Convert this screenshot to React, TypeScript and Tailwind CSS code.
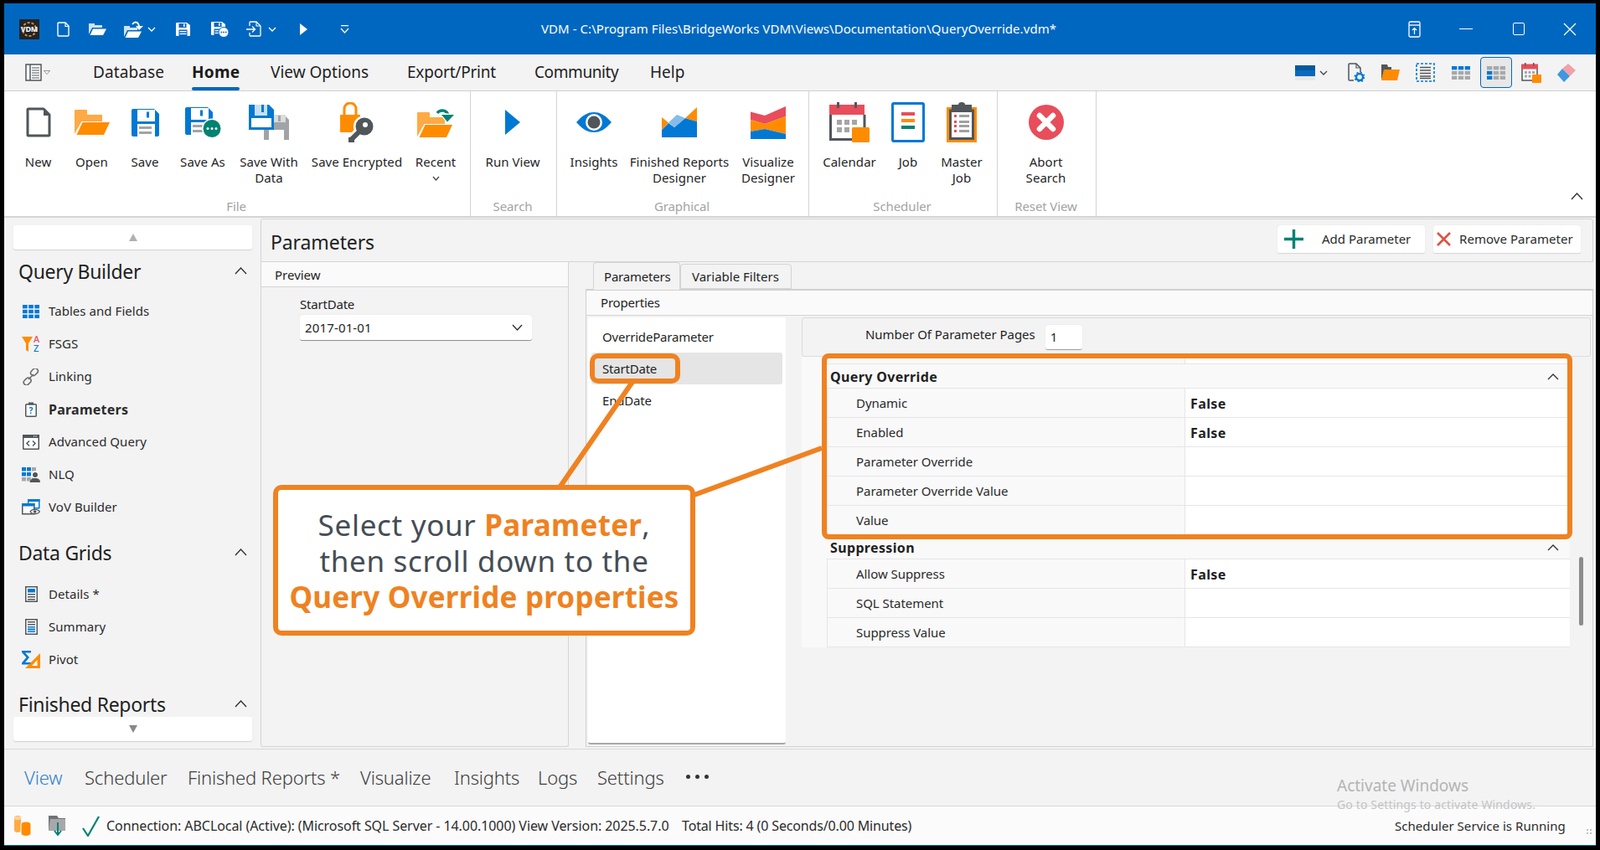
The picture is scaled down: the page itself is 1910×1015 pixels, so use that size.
import React from "react";

const BLUE = "#0078d4";
const ORANGE = "#ff8c00";
const LORANGE = "#ffaa44";
const GRAY = "#50565a";
const MID = "#a0a4a6";
const TEAL = "#008272";
const RED = "#e84d5b";

const Svg = ({ w, h, children }: { w: number; h: number; children: React.ReactNode }) => (
  <svg width={w} height={h} viewBox={`0 0 ${w} ${h}`} className="block shrink-0">
    {children}
  </svg>
);

const Floppy = ({ c = BLUE, line = "#a0a4a6" }: { c?: string; line?: string }) => (
  <g>
    <path d="M2 0H27L33 6V31a2 2 0 01-2 2H2a2 2 0 01-2-2V2a2 2 0 012-2z" fill={c} />
    <rect x="7" y="1" width="21" height="14" fill="#fff" />
    <rect x="18" y="3.5" width="3" height="7" fill={c} />
    <rect x="7" y="18" width="21" height="15" fill="#fff" />
    <rect x="9" y="21" width="15" height="3" fill={line} />
    <rect x="9" y="27" width="15" height="3" fill={line} />
  </g>
);

const Folder = ({ dy = 0 }: { dy?: number }) => (
  <g transform={`translate(0 ${dy})`}>
    <path d="M0 1a1 1 0 011-1h13a1 1 0 011 1v5h18v8H8.5L0 29z" fill={LORANGE} />
    <path d="M9.5 15H42L35 30H2.5z" fill={ORANGE} />
  </g>
);

const IconNew = () => (
  <Svg w={30} h={36}>
    <path d="M2 3a1 1 0 011-1h18l7 7v24a1 1 0 01-1 1H3a1 1 0 01-1-1z" fill="#fff" stroke={GRAY} strokeWidth="3" strokeLinejoin="round" />
    <path d="M21 3v7h7z" fill={GRAY} />
  </Svg>
);
const IconOpen = () => (
  <Svg w={42} h={30}>
    <Folder />
  </Svg>
);
const IconSave = () => (
  <Svg w={33} h={33}>
    <Floppy />
  </Svg>
);
const IconSaveAs = () => (
  <Svg w={43} h={37}>
    <Floppy />
    <circle cx="32" cy="25.5" r="12" fill="#fff" />
    <circle cx="32" cy="25.5" r="10.5" fill={TEAL} />
    <circle cx="27" cy="25.5" r="1.5" fill="#fff" />
    <circle cx="32" cy="25.5" r="1.5" fill="#fff" />
    <circle cx="37" cy="25.5" r="1.5" fill="#fff" />
  </Svg>
);
const IconSaveData = () => (
  <Svg w={48} h={42}>
    <path d="M18 12H42L48 18V42H18z" fill={MID} />
    <rect x="30" y="12" width="14" height="9" fill="#dcdcdc" />
    <rect x="35" y="13" width="3" height="7" fill={MID} />
    <rect x="24" y="30" width="18" height="12" fill="#fff" />
    <path d="M0 0H24L30 6V30H0z" fill={BLUE} stroke="#fff" strokeWidth="0" />
    <rect x="7" y="0" width="15" height="13" fill="#c7e0f4" />
    <rect x="15" y="0" width="3" height="9" fill={BLUE} />
    <rect x="3" y="16" width="24" height="11" fill="#fff" />
  </Svg>
);
const IconEncrypted = () => (
  <Svg w={40} h={48}>
    <path d="M5 16V8a7 7 0 0114 0v8" fill="none" stroke={ORANGE} strokeWidth="3" />
    <rect x="0" y="15" width="24" height="21" rx="1" fill={ORANGE} />
    <circle cx="29" cy="29" r="13" fill="#fff" />
    <path d="M24 33L11 46" stroke="#fff" strokeWidth="10" />
    <circle cx="29" cy="29" r="10.5" fill={GRAY} />
    <circle cx="30" cy="27" r="3" fill="#fff" />
    <path d="M24 34L13 45" stroke={GRAY} strokeWidth="6" />
    <rect x="10" y="42" width="7" height="6" fill={GRAY} />
  </Svg>
);
const IconRecent = () => (
  <Svg w={45} h={36}>
    <Folder dy={6} />
    <path d="M24 7C28 1 36 2 38 10" fill="none" stroke="#fff" strokeWidth="7" />
    <path d="M24 7C28 2 36 3 37.5 11" fill="none" stroke={TEAL} strokeWidth="3.5" />
    <path d="M28 8L44 9L36 18z" fill="#fff" stroke="#fff" strokeWidth="2" />
    <path d="M29 9H44L36 17.5z" fill={TEAL} />
  </Svg>
);
const IconRun = () => (
  <Svg w={18} h={30}>
    <path d="M0 0L18 15L0 30z" fill={BLUE} />
  </Svg>
);
const IconEye = () => (
  <Svg w={42} h={24}>
    <path d="M0 12C8 3 14 0 21 0S34 3 42 12C34 21 28 24 21 24S8 21 0 12z" fill={BLUE} />
    <circle cx="21" cy="12" r="10" fill="#fff" />
    <circle cx="21" cy="12" r="7.5" fill={GRAY} />
  </Svg>
);
const IconFinished = () => (
  <Svg w={42} h={36}>
    <path d="M0 27L8 19L15 24L28 13L42 17V36H0z" fill={BLUE} />
    <path d="M0 12L8 18.5L0 27z" fill={ORANGE} />
    <path d="M18 9L28 13L15 24L8 18.5z" fill="#84bcea" />
    <path d="M28 13L42 0V17z" fill={ORANGE} />
  </Svg>
);
const IconVisualize = () => (
  <Svg w={42} h={39}>
    <path d="M0 6.5L17 11L42 0V12L17 21L0 16z" fill={RED} />
    <path d="M0 16L17 21L42 12V33L17 27L0 30z" fill={ORANGE} />
    <path d="M0 30L17 27L42 33V39H0z" fill={BLUE} />
  </Svg>
);
const IconCalendar = () => (
  <Svg w={48} h={48}>
    <path d="M1.5 15V44.5H42V15" fill="#fff" stroke={GRAY} strokeWidth="3" />
    <rect x="0" y="3" width="42" height="12" fill={RED} />
    <rect x="9" y="0" width="3" height="7" fill={GRAY} />
    <rect x="30" y="0" width="3" height="7" fill={GRAY} />
    {[[9, 21], [18, 21], [27, 21], [9, 30], [18, 30]].map(([x, y]) => (
      <rect key={x + "-" + y} x={x} y={y} width="6" height="6" fill="#a6a6a6" />
    ))}
    <rect x="27" y="30" width="21" height="18" rx="1.5" fill={ORANGE} />
  </Svg>
);
const IconJob = () => (
  <Svg w={40} h={48}>
    <rect x="1.5" y="1.5" width="37" height="45" rx="1.5" fill="#fff" stroke={BLUE} strokeWidth="3" />
    <rect x="12" y="12" width="16" height="4" fill={RED} />
    <rect x="12" y="20" width="16" height="4" fill={ORANGE} />
    <rect x="12" y="28" width="16" height="4" fill={TEAL} />
  </Svg>
);
const IconMaster = () => (
  <Svg w={36} h={48}>
    <rect x="0" y="6" width="36" height="42" fill={ORANGE} />
    <rect x="4.5" y="10" width="27" height="33.5" fill="#fff" stroke={GRAY} strokeWidth="3" />
    <path d="M6 3H14A4 3 0 0122 3H30V12H6z" fill={GRAY} />
    {[15, 22, 27, 33].map((y) => (
      <g key={y}>
        <rect x="9" y={y} width="3" height="3" fill={RED} />
        <rect x="15" y={y} width="12" height="3" fill="#a0a0a0" />
      </g>
    ))}
  </Svg>
);
const IconAbort = () => (
  <Svg w={42} h={42}>
    <circle cx="21" cy="21" r="21" fill={RED} />
    <path d="M13 13L29 29M29 13L13 29" stroke="#fff" strokeWidth="6.5" strokeLinecap="round" />
  </Svg>
);

/* sidebar */
const Grid3 = ({ w, h, cells, g = 1.5 }: { w: number; h: number; cells: string[]; g?: number }) => {
  const cw = (w - 2 * g) / 3;
  const ch = (h - 2 * g) / 3;
  return (
    <Svg w={w} h={h}>
      {cells.map((c, i) => (
        <rect key={i} x={(i % 3) * (cw + g)} y={Math.floor(i / 3) * (ch + g)} width={cw} height={ch} fill={c} />
      ))}
    </Svg>
  );
};
const SQ = "#a6a8aa";
const IconTables = () => <Grid3 w={20} h={16} cells={Array(9).fill(BLUE)} />;
const IconFsgs = () => (
  <div className="relative w-[22px] h-[18px]">
    <Svg w={14} h={18}>
      <path d="M0 0H13L8 8V18L5 16V8z" fill={ORANGE} />
    </Svg>
    <span className="absolute left-[14px] top-[-2px] text-[11px] leading-[10px] font-medium text-[#e84d5b]">A</span>
    <span className="absolute left-[14px] top-[9px] text-[11px] leading-[9px] font-medium text-[#0078d4]">Z</span>
  </div>
);
const IconLink = () => (
  <Svg w={20} h={20}>
    <g fill="none" stroke="#6a6e71" strokeWidth="1.6">
      <rect x="9.5" y="1" width="9.5" height="6.5" rx="3.2" transform="rotate(-45 14 4.5)" />
      <rect x="1" y="12" width="9.5" height="6.5" rx="3.2" transform="rotate(-45 6 15.5)" />
      <path d="M7 13L13 7" />
    </g>
  </Svg>
);
const IconParam = () => (
  <div className="relative w-[14px] h-[18px]">
    <Svg w={14} h={18}>
      <rect x="0.75" y="2.75" width="12.5" height="14.5" rx="1" fill="#fff" stroke={GRAY} strokeWidth="1.5" />
      <rect x="4" y="0.5" width="6" height="3" fill={GRAY} />
    </Svg>
    <span className="absolute left-0 top-[4px] w-[14px] text-center text-[10px] leading-[12px] font-bold text-[#0078d4]">?</span>
  </div>
);
const IconAdvanced = () => (
  <Svg w={20} h={18}>
    <rect x="0.75" y="0.75" width="18.5" height="16.5" rx="0.5" fill="#fff" stroke={GRAY} strokeWidth="1.5" />
    <rect x="0" y="0" width="20" height="4" fill={GRAY} />
    <rect x="13" y="1.3" width="1.2" height="1.2" fill="#fff" />
    <rect x="15.5" y="1.3" width="1.2" height="1.2" fill="#fff" />
    <path d="M8 7.5L5 10.5L8 13.5M12 7.5L15 10.5L12 13.5" fill="none" stroke={GRAY} strokeWidth="1.5" />
  </Svg>
);
const IconNlq = () => (
  <Svg w={22} h={18}>
    {[0, 6, 12].map((y) =>
      [0, 6, 12].map((x) => <rect key={x + "-" + y} x={x} y={y} width="5" height="4.5" fill={y === 0 || (y === 6 && x < 12) ? (x === 12 ? SQ : BLUE) : SQ} />)
    )}
    <circle cx="16" cy="9" r="4.5" fill="#fff" />
    <circle cx="16" cy="9" r="3" fill={GRAY} />
    <path d="M9.5 18C10 14 13 13 16 13S22 14 22 18z" fill={GRAY} />
  </Svg>
);
const IconVov = () => (
  <Svg w={22} h={20}>
    <rect x="7.75" y="0.75" width="13" height="10" fill="#fff" stroke={BLUE} strokeWidth="1.5" />
    <rect x="7" y="0" width="14.5" height="3" fill={BLUE} />
    <rect x="0.75" y="5.75" width="14" height="12" fill="#fff" stroke={GRAY} strokeWidth="1.5" />
    <rect x="0" y="5" width="15.5" height="3.5" fill={BLUE} />
    <path d="M10 15C12 11.5 19 11.5 21.5 15C19 18.5 12 18.5 10 15z" fill="#fff" stroke={GRAY} strokeWidth="1.2" />
    <circle cx="15.7" cy="15" r="1.8" fill={GRAY} />
  </Svg>
);
const IconDetails = () => (
  <Svg w={15} h={19}>
    <rect x="0.75" y="0.75" width="13.5" height="17.5" fill="#fff" stroke={GRAY} strokeWidth="1.5" />
    <rect x="3" y="3" width="9" height="4.5" fill={BLUE} />
    <rect x="3" y="9" width="9" height="1.5" fill={GRAY} />
    <rect x="3" y="12" width="9" height="1.5" fill={GRAY} />
    <rect x="3" y="15" width="9" height="1.5" fill={GRAY} />
  </Svg>
);
const IconSummary = () => (
  <Svg w={15} h={19}>
    <rect x="0.75" y="0.75" width="13.5" height="17.5" fill="#fff" stroke={GRAY} strokeWidth="1.5" />
    <rect x="3" y="3" width="9" height="1.5" fill={GRAY} />
    <rect x="3" y="6" width="9" height="1.5" fill={GRAY} />
    <rect x="3" y="9" width="9" height="1.5" fill={BLUE} />
    <rect x="3" y="11.5" width="9" height="2" fill={BLUE} />
    <rect x="3" y="14.5" width="9" height="1.5" fill={BLUE} />
  </Svg>
);
const IconPivot = () => (
  <Svg w={22} h={21}>
    <path d="M0 0H11V2.5H4L9 8L4 14H11V16.5H0V14.5L5.5 8L0 2V0z" fill={BLUE} />
    <path d="M22 3V21H4z" fill={ORANGE} />
    <path d="M18.5 11V18H12z" fill="#fff" />
  </Svg>
);

const Chev = ({ up = false, w = 14, h = 8, c = "#333", sw = 1.4 }: { up?: boolean; w?: number; h?: number; c?: string; sw?: number }) => (
  <Svg w={w} h={h}>
    <path d={up ? `M1 ${h - 1}L${w / 2} 1L${w - 1} ${h - 1}` : `M1 1L${w / 2} ${h - 1}L${w - 1} 1`} fill="none" stroke={c} strokeWidth={sw} />
  </Svg>
);

/* ribbon */
const RB = ({ w, icon, lines, chev }: { w: number; icon: React.ReactNode; lines: string[]; chev?: boolean }) => (
  <div className="flex flex-col items-center shrink-0" style={{ width: w }}>
    <div className="h-[50px] mt-[12px] flex items-center justify-center">{icon}</div>
    <div className="mt-[13px] text-center text-[15px] leading-[19px] tracking-[0.05px] text-[#1f1f1f] whitespace-nowrap">
      {lines.map((l) => (
        <div key={l}>{l}</div>
      ))}
      {chev && (
        <div className="flex justify-center pt-[7px]">
          <Chev w={9} h={6} c="#444" sw={1.2} />
        </div>
      )}
    </div>
  </div>
);
const RG = ({ w, label, pl = 0, children }: { w: number; label: string; pl?: number; children: React.ReactNode }) => (
  <div className="relative h-full border-r border-[#d4d4d4] flex shrink-0" style={{ width: w, paddingLeft: pl }}>
    {children}
    <div className="absolute left-0 right-[2px] top-[127px] text-center text-[15px] leading-[20px] tracking-[-0.1px] text-[#a3a3a3]">{label}</div>
  </div>
);

const SB = ({ icon, label, bold }: { icon: React.ReactNode; label: string; bold?: boolean }) => (
  <div className="h-[39px] flex items-center relative pl-[53px]">
    <div className="absolute left-[21px] w-[22px] flex justify-center">{icon}</div>
    <span className={`whitespace-nowrap text-[#2b2b2b] ${bold ? "text-[16px] font-bold tracking-[0.25px]" : "text-[15px] tracking-[0.05px]"}`}>{label}</span>
  </div>
);
const SH = ({ label, mt }: { label: string; mt: string }) => (
  <div className={`h-[30px] flex items-center justify-between pl-[17px] pr-[16px] ${mt}`}>
    <span className="text-[23px] leading-[30px] tracking-[-0.3px] text-[#1f1f1f] whitespace-nowrap -mt-[2px]">{label}</span>
    <div className="-mt-[4px]">
      <Chev up w={15} h={9} />
    </div>
  </div>
);

const Row = ({ label, value }: { label: string; value?: string }) => (
  <div className="h-[35px] flex">
    <div className="w-[30px] bg-[#f9f9f9]" />
    <div className="w-[428px] bg-[#f9f9f9] border-b border-r border-l border-[#e6e6e6] flex items-center pl-[34px] text-[15px] tracking-[-0.05px] text-[#2b2b2b] whitespace-nowrap">{label}</div>
    <div className="flex-1 bg-white border-b border-[#e6e6e6] flex items-center pl-[6px] pt-[2px] text-[16px] font-bold tracking-[0.4px] text-[#1f1f1f]">{value}</div>
  </div>
);
const Sec = ({ label }: { label: string }) => (
  <div className="h-[29px] bg-[#f9f9f9] flex items-center justify-between pl-[34px] pr-[13px] relative">
    <span className="text-[16px] font-bold tracking-[0.35px] text-[#1f1f1f]">{label}</span>
    <Chev up w={14} h={8} />
    <div className="absolute left-[30px] right-0 bottom-0 border-b border-[#e6e6e6]" />
  </div>
);

const WhiteFloppyPaths = () => (
  <g>
    <path d="M0 1a1 1 0 011-1H13L17 3V15a1 1 0 01-1 1H1a1 1 0 01-1-1z" fill="#fff" />
    <rect x="3.5" y="1" width="9" height="5" fill="#0067c0" />
    <rect x="9" y="1.5" width="1.6" height="3.5" fill="#fff" />
    <rect x="3.5" y="8.5" width="10" height="7.5" fill="#0067c0" />
    <rect x="4.5" y="10" width="8" height="1.3" fill="#fff" />
    <rect x="4.5" y="12.8" width="8" height="1.3" fill="#fff" />
  </g>
);

export default function App() {
  const menu: [string, number, boolean?, string?][] = [
    ["Database", 118, false, "tracking-[0.1px]"],
    ["Home", 94, true, ""],
    ["View Options", 163, false, "tracking-[0px]"],
    ["Export/Print", 152, false, "tracking-[-0.2px]"],
    ["Community", 138, false, "tracking-[-0.4px]"],
    ["Help", 60, false, "tracking-[0px]"],
  ];
  const tabs: [string, number][] = [
    ["View", 72],
    ["Scheduler", 123],
    ["Finished Reports *", 206],
    ["Visualize", 112],
    ["Insights", 100],
    ["Logs", 71],
    ["Settings", 106],
  ];
  return (
    <div className="relative w-[1910px] h-[1015px] overflow-hidden bg-black font-['Noto_Sans',sans-serif] text-[#1f1f1f]">
      <div className="absolute left-[5px] top-[4px] w-[1900px] h-[1006px] bg-[#f3f3f3] flex flex-col border-b border-[#0067c0]">
        {/* title bar */}
        <div className="relative h-[61px] shrink-0 bg-[#0067c0] flex items-center text-white">
          <div className="relative ml-[18px] w-[24px] h-[24px] bg-[#20242a] flex items-center justify-center overflow-hidden">
            <svg width="24" height="24" viewBox="0 0 24 24" className="absolute left-0 top-0">
              <circle cx="12" cy="12" r="8" fill="none" stroke="#f08a24" strokeWidth="2" strokeDasharray="3 2" />
            </svg>
            <span className="relative text-[9px] leading-none font-bold tracking-[-0.2px] text-white">VDM</span>
          </div>
          <div className="ml-[21px]">
            <Svg w={15} h={18}>
              <path d="M1 2a1 1 0 011-1h8l4 4v11a1 1 0 01-1 1H2a1 1 0 01-1-1z" fill="none" stroke="#fff" strokeWidth="1.4" />
              <path d="M10 1.5V5.5H14" fill="none" stroke="#fff" strokeWidth="1.2" />
            </Svg>
          </div>
          <div className="ml-[23px]">
            <Svg w={21} h={15}>
              <path d="M0 1h7v2h9v3H4L0 14z" fill="#cfe2f5" />
              <path d="M5 7.5H21L17 15H1.5z" fill="#fff" />
            </Svg>
          </div>
          <div className="ml-[21px]">
            <Svg w={23} h={20}>
              <path d="M0 6h7v2h9v3H4L0 19z" fill="#cfe2f5" />
              <path d="M5 12.5H21L17 20H1.5z" fill="#fff" />
              <path d="M10 4C13 0 17 1 18 6" fill="none" stroke="#fff" strokeWidth="1.8" />
              <path d="M14 6H23L18 11z" fill="#fff" />
            </Svg>
          </div>
          <div className="ml-[5px]">
            <Chev w={10} h={6} c="#fff" sw={1.3} />
          </div>
          <div className="ml-[24px]">
            <Svg w={17} h={16}>
              <WhiteFloppyPaths />
            </Svg>
          </div>
          <div className="ml-[25px]">
            <Svg w={21} h={18}>
              <WhiteFloppyPaths />
              <circle cx="15" cy="12.5" r="6" fill="#fff" stroke="#0067c0" strokeWidth="1" />
              <circle cx="12.3" cy="12.5" r="0.9" fill="#0067c0" />
              <circle cx="15" cy="12.5" r="0.9" fill="#0067c0" />
              <circle cx="17.7" cy="12.5" r="0.9" fill="#0067c0" />
            </Svg>
          </div>
          <div className="ml-[21px]">
            <Svg w={18} h={19}>
              <path d="M4 6V2a1 1 0 011-1h7l5 5v11a1 1 0 01-1 1H5a1 1 0 01-1-1v-3" fill="none" stroke="#fff" strokeWidth="1.3" />
              <path d="M12 1.5V6H17" fill="none" stroke="#fff" strokeWidth="1.1" />
              <path d="M0 10H10M7 6.5L10.5 10L7 13.5" fill="none" stroke="#fff" strokeWidth="1.3" />
            </Svg>
          </div>
          <div className="ml-[8px]">
            <Chev w={10} h={6} c="#fff" sw={1.3} />
          </div>
          <div className="ml-[28px]">
            <Svg w={9} h={14}>
              <path d="M0 0L9 7L0 14z" fill="#fff" />
            </Svg>
          </div>
          <div className="ml-[39px]">
            <Svg w={11} h={10}>
              <path d="M1 0.7H10M1 4L5.5 9L10 4" fill="none" stroke="#fff" strokeWidth="1.2" />
            </Svg>
          </div>
          <div className="absolute left-[641px] top-0 h-[61px] flex items-center text-[15px] tracking-[0.06px] whitespace-nowrap text-white">VDM - C:\Program Files\BridgeWorks VDM\Views\Documentation\QueryOverride.vdm*</div>
          <div className="absolute left-[1652px] top-0 h-[61px] flex">
            <div className="w-[62px] flex items-center justify-center">
              <Svg w={15} h={20}>
                <rect x="1" y="1" width="13" height="18" rx="1.5" fill="none" stroke="#fff" strokeWidth="1.3" />
                <path d="M1 5H14" stroke="#fff" strokeWidth="1.3" />
                <path d="M7.5 16V8.5M5 11L7.5 8.5L10 11" fill="none" stroke="#fff" strokeWidth="1.2" />
              </Svg>
            </div>
            <div className="w-[62px] flex items-center justify-center">
              <div className="w-[16px] h-[1.5px] bg-white" />
            </div>
            <div className="w-[62px] flex items-center justify-center pl-[1px]">
              <div className="w-[14px] h-[15px] border-[1.3px] border-white rounded-[2px]" />
            </div>
            <div className="w-[62px] flex items-center justify-center">
              <Svg w={16} h={16}>
                <path d="M1 1L15 15M15 1L1 15" stroke="#fff" strokeWidth="1.3" />
              </Svg>
            </div>
          </div>
        </div>

        {/* menu bar */}
        <div className="h-[44px] shrink-0 bg-[#f3f3f3] border-b border-[#d0d0d0] flex items-center relative">
          <div className="ml-[25px] w-[20px]">
            <Svg w={20} h={21}>
              <rect x="1" y="1" width="18" height="19" fill="#fff" stroke={GRAY} strokeWidth="1.5" />
              <path d="M6 1V20" stroke={GRAY} strokeWidth="1.5" />
              <path d="M8 5H17M8 8H17M8 11H17M8 14H17M8 17H17" stroke={GRAY} strokeWidth="1.2" />
            </Svg>
          </div>
          <div className="ml-[2px] w-[8px] mr-[51px]">
            <Svg w={8} h={5}>
              <path d="M0.5 0.5H7.5L4 4.5z" fill="#fff" stroke="#777" strokeWidth="0.8" />
            </Svg>
          </div>
          {menu.map(([m, w, active, tr]) => (
            <div key={m} className="relative h-[43px] flex items-center shrink-0" style={{ width: w }}>
              <span className={`text-[19px] whitespace-nowrap ${tr} ${active ? "font-bold tracking-[0.3px] text-[#1b1b1b]" : "text-[#1f1f1f]"}`}>{m}</span>
              {active && <div className="absolute left-0 bottom-0 w-[57px] h-[4px] rounded-full bg-[#0067c0]" />}
            </div>
          ))}
          <div className="absolute left-[1541px] top-0 h-[43px] flex items-center">
            <div className="w-[24px]">
              <div className="h-[6px] bg-[#005a9e]" />
              <div className="h-[7px] bg-[#0a68bd]" />
              <div className="h-[5px] bg-[#e8e8e8]" />
            </div>
            <div className="ml-[5px]">
              <Chev w={10} h={6} c="#444" sw={1.3} />
            </div>
            <div className="ml-[24px]">
              <Svg w={20} h={23}>
                <path d="M1 2a1 1 0 011-1h8l5 5v5M1 2V20a1 1 0 001 1h5" fill="none" stroke={GRAY} strokeWidth="1.5" />
                <path d="M10 1V6H15" fill="none" stroke={GRAY} strokeWidth="1.2" />
                <circle cx="14" cy="17" r="4" fill="none" stroke={BLUE} strokeWidth="2.4" />
                <circle cx="14" cy="17" r="5.7" fill="none" stroke={BLUE} strokeWidth="1.6" strokeDasharray="2 2.5" />
              </Svg>
            </div>
            <div className="ml-[20px]">
              <Svg w={22} h={19}>
                <path d="M0 0H7L8 3H12V8H3L0 19z" fill={GRAY} />
                <path d="M3 6H22L19 19H0z" fill={ORANGE} />
              </Svg>
            </div>
            <div className="ml-[19px]">
              <Svg w={23} h={23}>
                <rect x="1" y="1" width="21" height="21" fill="none" stroke={BLUE} strokeWidth="1.6" strokeDasharray="3 2" />
                <path d="M5 5.5H18M5 9H18M5 12.5H18M5 16H18M5 18.5H18" stroke={GRAY} strokeWidth="1.4" />
              </Svg>
            </div>
            <div className="ml-[20px]">
              <Grid3 w={22} h={16} cells={[BLUE, BLUE, BLUE, SQ, SQ, SQ, SQ, SQ, SQ]} />
            </div>
            <div className="ml-[12px] w-[38px] h-[37px] rounded-[4px] border border-[#0067c0] bg-[#e8e8e8] flex items-center justify-center">
              <Grid3 w={22} h={16} cells={[SQ, SQ, SQ, BLUE, SQ, SQ, BLUE, SQ, SQ]} />
            </div>
            <div className="ml-[11px]">
              <Svg w={24} h={24}>
                <path d="M1 7V21H19V7" fill="#fff" stroke={GRAY} strokeWidth="1.5" />
                <rect x="0" y="1.5" width="20" height="6" fill={RED} />
                <rect x="4" y="0" width="1.5" height="3.5" fill={GRAY} />
                <rect x="14" y="0" width="1.5" height="3.5" fill={GRAY} />
                <path d="M4 10h3v3H4zM8.5 10h3v3h-3zM13 10h3v3h-3zM4 14.5h3v3H4zM8.5 14.5h3v3h-3z" fill="#a6a6a6" />
                <rect x="13" y="14" width="11" height="10" fill={ORANGE} />
              </Svg>
            </div>
            <div className="ml-[19px]">
              <Svg w={22} h={22}>
                <path d="M13 0L22 8L15 15L6 6z" fill="#f3a0a8" />
                <path d="M6 6L15 15L8 22L0 13z" fill="#3f97e2" />
              </Svg>
            </div>
          </div>
        </div>

        {/* ribbon */}
        <div className="relative h-[149px] shrink-0 bg-white flex border-b-0">
          <RG w={557} label="File" pl={14}>
            <RB w={53} icon={<IconNew />} lines={["New"]} />
            <RB w={75} icon={<IconOpen />} lines={["Open"]} />
            <RB w={52} icon={<IconSave />} lines={["Save"]} />
            <RB w={86} icon={<IconSaveAs />} lines={["Save As"]} />
            <RB w={72} icon={<IconSaveData />} lines={["Save With", "Data"]} />
            <RB w={138} icon={<IconEncrypted />} lines={["Save Encrypted"]} />
            <RB w={50} icon={<IconRecent />} lines={["Recent"]} chev />
          </RG>
          <RG w={103} label="Search">
            <div className="w-full flex justify-center pr-[2px]">
              <RB w={97} icon={<IconRun />} lines={["Run View"]} />
            </div>
          </RG>
          <RG w={301} label="Graphical">
            <RB w={88} icon={<IconEye />} lines={["Insights"]} />
            <RB w={116} icon={<IconFinished />} lines={["Finished Reports", "Designer"]} />
            <RB w={96} icon={<IconVisualize />} lines={["Visualize", "Designer"]} />
          </RG>
          <RG w={225} label="Scheduler">
            <RB w={96} icon={<IconCalendar />} lines={["Calendar"]} />
            <RB w={44} icon={<IconJob />} lines={["Job"]} />
            <RB w={84} icon={<IconMaster />} lines={["Master", "Job"]} />
          </RG>
          <RG w={118} label="Reset View">
            <RB w={115} icon={<IconAbort />} lines={["Abort", "Search"]} />
          </RG>
          <div className="absolute left-[1870px] top-[121px]">
            <Chev up w={15} h={9} />
          </div>
        </div>
        <div className="h-[2px] shrink-0 bg-[#d4d4d4]" />

        {/* body */}
        <div className="h-[634px] shrink-0 flex">
          <div className="relative w-[306px] shrink-0 overflow-hidden">
            <div className="mt-[9px] ml-[11px] w-[285px] h-[29px] bg-white rounded-[3px] shadow-[0_1px_1px_#d0d0d0] flex items-center justify-center">
              <div className="w-0 h-0 border-l-[5px] border-r-[5px] border-b-[9px] border-l-transparent border-r-transparent border-b-[#b0b0b0]" />
            </div>
            <SH label="Query Builder" mt="mt-[12px]" />
            <div className="mt-[12px]">
              <SB icon={<IconTables />} label="Tables and Fields" />
              <SB icon={<IconFsgs />} label="FSGS" />
              <SB icon={<IconLink />} label="Linking" />
              <SB icon={<IconParam />} label="Parameters" bold />
              <SB icon={<IconAdvanced />} label="Advanced Query" />
              <SB icon={<IconNlq />} label="NLQ" />
              <SB icon={<IconVov />} label="VoV Builder" />
            </div>
            <SH label="Data Grids" mt="mt-[21px]" />
            <div className="mt-[14px]">
              <SB icon={<IconDetails />} label="Details *" />
              <SB icon={<IconSummary />} label="Summary" />
              <SB icon={<IconPivot />} label="Pivot" />
            </div>
            <SH label="Finished Reports" mt="mt-[20px]" />
            <div className="absolute left-[11px] top-[596px] w-[285px] h-[29px] bg-white rounded-[3px] shadow-[0_1px_1px_#d0d0d0] flex items-center justify-center">
              <div className="w-0 h-0 border-l-[5px] border-r-[5px] border-t-[9px] border-l-transparent border-r-transparent border-t-[#888]" />
            </div>
          </div>

          <div className="w-[1591px] shrink-0 pt-[1px] flex flex-col">
            <div className="h-[52px] shrink-0 border border-[#d4d4d4] rounded-t-[3px] flex items-center pl-[11px] pr-[14px]">
              <span className="text-[23px] tracking-[-0.1px] text-[#1f1f1f] mt-[4px]">Parameters</span>
              <div className="ml-auto w-[176px] h-[34px] -mt-[2px] bg-white rounded-[3px] border-b border-[#d8d8d8] shadow-[0_0_1px_#ccc] flex items-center pl-[8px]">
                <Svg w={23} h={23}>
                  <path d="M11.5 0V23M0 11.5H23" stroke={TEAL} strokeWidth="3.4" />
                </Svg>
                <span className="ml-[22px] text-[15px] tracking-[0px] text-[#2b2b2b] whitespace-nowrap">Add Parameter</span>
              </div>
              <div className="ml-[10px] w-[176px] h-[34px] -mt-[2px] bg-white rounded-[3px] border-b border-[#d8d8d8] shadow-[0_0_1px_#ccc] flex items-center pl-[4px]">
                <Svg w={17} h={17}>
                  <path d="M1 1L16 16M16 1L1 16" stroke="#d9553f" strokeWidth="2.6" />
                </Svg>
                <span className="ml-[10px] text-[15px] tracking-[0.05px] text-[#2b2b2b] whitespace-nowrap">Remove Parameter</span>
              </div>
            </div>

            <div className="h-[579px] shrink-0 flex">
              <div className="w-[368px] shrink-0 border border-t-0 border-[#d4d4d4] rounded-b-[3px]">
                <div className="h-[30px] bg-[#fafafa] border-b border-[#d4d4d4] flex items-center pl-[16px] pt-[2px] text-[15px] tracking-[0px]">Preview</div>
                <div className="ml-[46px] mt-[10px] text-[15px] leading-[20px] tracking-[-0.2px]">StartDate</div>
                <div className="ml-[46px] mt-[3px] w-[277px] h-[31px] bg-white rounded-[3px] border-b border-[#8f8f8f] shadow-[0_0_1px_#ccc] flex items-center justify-between pl-[6px] pr-[11px] text-[15px] tracking-[0.15px]">
                  <span>2017-01-01</span>
                  <Chev w={13} h={8} c="#333" sw={1.4} />
                </div>
              </div>

              <div className="ml-[20px] w-[1203px] shrink-0 flex flex-col">
                <div className="h-[32px] shrink-0 flex pl-[9px]">
                  <div className="w-[104px] h-[33px] relative z-10 bg-[#f3f3f3] border border-b-0 border-[#d4d4d4] rounded-t-[4px] flex items-center pl-[12px] text-[15px] tracking-[-0.2px]">Parameters</div>
                  <div className="w-[133px] h-[30px] mt-[2px] bg-[#f3f3f3] border border-[#d4d4d4] rounded-t-[4px] flex items-center pl-[13px] text-[15px] tracking-[0px]">Variable Filters</div>
                </div>
                <div className="flex-1 border border-t-2 border-[#d0d0d0] flex flex-col">
                  <div className="h-[30px] shrink-0 bg-[#fafafa] border-b border-[#d4d4d4] flex items-center pl-[17px] text-[15px] tracking-[-0.2px]">Properties</div>
                  <div className="flex-1 flex pt-[2px] pl-[2px]">
                    <div className="w-[236px] h-[510px] bg-white rounded-[3px] border-b-2 border-[#a8a8a8] shrink-0 pt-[4px] px-[4px] text-[15px] tracking-[-0.2px]">
                      <div className="h-[38px] flex items-center pl-[13px]">OverrideParameter</div>
                      <div className="h-[38px] flex items-center pl-[13px] bg-[#e5e5e5] rounded-[3px]">StartDate</div>
                      <div className="h-[38px] flex items-center pl-[13px]">EndDate</div>
                    </div>
                    <div className="ml-[19px] w-[942px] shrink-0 flex flex-col relative">
                      <div className="h-[47px] shrink-0 bg-[#f3f3f3] border border-[#dcdcdc] rounded-[3px] flex items-center pl-[75px]">
                        <span className="text-[15px] tracking-[-0.05px] -mt-[6px] whitespace-nowrap">Number Of Parameter Pages</span>
                        <div className="ml-[12px] w-[44px] h-[30px] bg-white rounded-[3px] border-b border-[#a0a0a0] shadow-[0_0_1px_#ccc] flex items-center pl-[6px] text-[15px]">1</div>
                      </div>
                      <div className="w-[917px]">
                        <div className="h-[9px] flex">
                          <div className="w-[30px] bg-[#f9f9f9]" />
                          <div className="w-[428px] bg-[#f9f9f9] border-b border-r border-l border-[#e6e6e6]" />
                          <div className="flex-1 bg-white border-b border-[#e6e6e6]" />
                        </div>
                        <Sec label="Query Override" />
                        <Row label="Dynamic" value="False" />
                        <Row label="Enabled" value="False" />
                        <Row label="Parameter Override" />
                        <Row label="Parameter Override Value" />
                        <Row label="Value" />
                        <div className="border-b border-[#e6e6e6] -mt-[1px]" />
                        <Sec label="Suppression" />
                        <Row label="Allow Suppress" value="False" />
                        <Row label="SQL Statement" />
                        <Row label="Suppress Value" />
                        <div className="border-b border-[#e6e6e6] -mt-[1px]" />
                      </div>
                      <div className="absolute left-[928px] top-[286px] w-[5px] h-[82px] rounded-full bg-[#8c8c8c]" />
                    </div>
                  </div>
                </div>
              </div>
            </div>
          </div>
        </div>
        <div className="h-[1px] shrink-0 bg-[#d8d8d8]" />

        {/* bottom tabs */}
        <div className="h-[67px] shrink-0 flex items-center pl-[24px]">
          {tabs.map(([t, w], i) => (
            <div key={t} className={`shrink-0 text-[22px] font-light tracking-[-0.15px] whitespace-nowrap ${i === 0 ? "text-[#2f7fc8]" : "text-[#3c3c3c]"}`} style={{ width: w }}>
              {t}
            </div>
          ))}
          <div className="flex gap-[6px] -mt-[2px]">
            <div className="w-[5px] h-[5px] rounded-full bg-[#333]" />
            <div className="w-[5px] h-[5px] rounded-full bg-[#333]" />
            <div className="w-[5px] h-[5px] rounded-full bg-[#333]" />
          </div>
        </div>

        {/* status */}
        <div className="h-[47px] shrink-0 border-t border-[#d8d8d8] bg-[#fbfbfb] flex items-center relative text-[#2b2b2b]">
          <div className="ml-[11px]">
            <Svg w={24} h={25}>
              <path d="M1 3a4 3 0 018 0V17a4 3 0 01-8 0z" fill={LORANGE} />
              <ellipse cx="5" cy="3" rx="4" ry="2.2" fill="#ffd29a" />
              <path d="M9 10a6 3 0 0112 0V21a6 3.5 0 01-12 0z" fill={ORANGE} stroke="#fff" strokeWidth="1" />
            </Svg>
          </div>
          <div className="ml-[18px]">
            <Svg w={22} h={24}>
              <path d="M0 0H10L12 3H20V18H0z" fill="#6f7376" />
              <path d="M2 4H20V18H0z" fill="#a6a8aa" />
              <path d="M11 8V22M7 18L11 23L15 18" fill="none" stroke={TEAL} strokeWidth="2" />
            </Svg>
          </div>
          <div className="ml-[18px]">
            <Svg w={22} h={25}>
              <path d="M1 15L7 24L20 1" fill="none" stroke={TEAL} strokeWidth="2.2" />
            </Svg>
          </div>
          <span className="ml-[7px] whitespace-nowrap text-[16px] tracking-[-0.07px]">Connection: ABCLocal (Active): (Microsoft SQL Server - 14.00.1000) View Version: 2025.5.7.0</span>
          <span className="absolute left-[809px] whitespace-nowrap text-[16px] tracking-[-0.15px]">Total Hits: 4 (0 Seconds/0.00 Minutes)</span>
          <span className="absolute left-[1660px] whitespace-nowrap text-[15px] tracking-[0.05px]">Scheduler Service is Running</span>
          <div className="absolute left-[1889px] top-[27px] grid grid-cols-2 gap-[2px]">
            {[0, 1, 2, 3].map((i) => (
              <div key={i} className="w-[2px] h-[2px] bg-[#c0c0c0]" />
            ))}
          </div>
        </div>
      </div>

      {/* Windows watermark */}
      <div className="absolute left-[1596px] top-[925px] text-[19px] leading-[26px] tracking-[0px] text-[#b4b4b4] whitespace-nowrap">Activate Windows</div>
      <div className="absolute left-[1596px] top-[951px] text-[14px] leading-[20px] tracking-[0.15px] text-[#c4c4c4] whitespace-nowrap">Go to Settings to activate Windows.</div>

      {/* annotations */}
      <svg width="1910" height="1015" viewBox="0 0 1910 1015" className="absolute left-0 top-0 pointer-events-none">
        <path d="M668 582L755 456" stroke="#ef8221" strokeWidth="6" />
        <path d="M981 535L826 592" stroke="#ef8221" strokeWidth="6" />
      </svg>
      <div className="absolute left-[704px] top-[422px] w-[108px] h-[36px] border-[6px] border-[#ef8221] rounded-[10px]" />
      <div className="absolute left-[981px] top-[422px] w-[896px] h-[222px] border-[6px] border-[#ef8221] rounded-[8px]" />
      <div className="absolute left-[326px] top-[579px] w-[504px] h-[180px] bg-white border-[6px] border-[#ef8221] rounded-[10px] flex flex-col items-center justify-center font-['Inter',sans-serif] text-[35px] leading-[43px] text-[#454d55] tracking-[0.68px]">
        <div className="whitespace-nowrap">
          Select your <span className="font-bold tracking-[0.3px] text-[#ef8221]">Parameter</span>,
        </div>
        <div className="whitespace-nowrap">then scroll down to the</div>
        <div className="whitespace-nowrap font-bold tracking-[0.2px] text-[#ef8221]">Query Override properties</div>
      </div>
    </div>
  );
}
